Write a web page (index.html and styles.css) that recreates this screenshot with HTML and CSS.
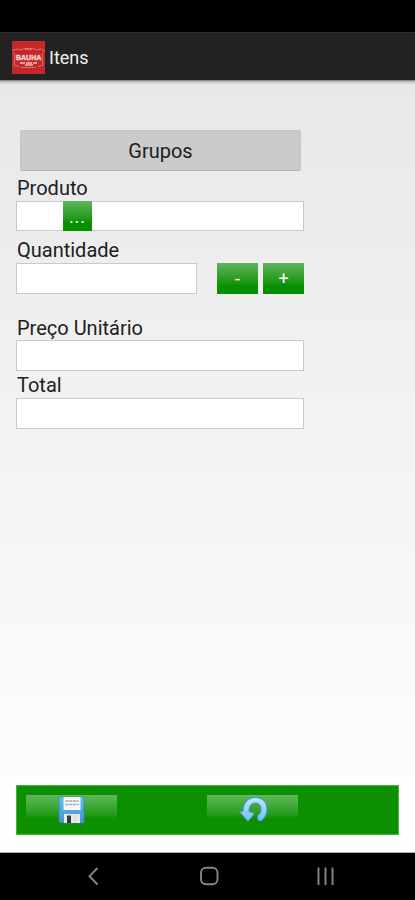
FILE: index.html
```html
<!DOCTYPE html>
<html lang="pt">
<head>
<meta charset="utf-8">
<title>Itens</title>
<link rel="stylesheet" href="styles.css">
</head>
<body>
<div class="status"></div>
<header class="header">
  <svg class="logo" viewBox="0 0 33 33">
    <rect width="33" height="33" fill="#c62829"/>
    <g fill="none" stroke="#dc8583" stroke-width=".8">
      <path d="M0 9.500 5 8 8 9 12 7.500 21 7.500 25 9 29 8 33 10.500M1 12 3 14 2 24 7 25.500M31 12 30 14 31 24 26 25.500M9 26.500h15M13 8.500h7"/>
    </g>
    <text x="4" y="18.500" class="brand">BAUHA</text>
    <path d="M8 22h5m1 0h6m1 0h4M13 24h8" stroke="#eebbb9" stroke-width="1.300"/>
  </svg>
  <h1 class="title">Itens</h1>
</header>
<main class="content">
  <form class="form">
    <button type="button" class="groups">Grupos</button>
    <label class="label">Produto</label>
    <div class="field product"><button type="button" class="green dots">...</button></div>
    <label class="label label-qty">Quantidade</label>
    <div class="row">
      <div class="field qty"></div>
      <button type="button" class="green step minus">-</button>
      <button type="button" class="green step">+</button>
    </div>
    <label class="label label-price">Preço Unitário</label>
    <div class="field"></div>
    <label class="label label-total">Total</label>
    <div class="field"></div>
  </form>
  <footer class="toolbar">
    <button type="button" class="tool">
      <svg width="27" height="28" viewBox="0 0 27 28">
        <defs><linearGradient id="disk" x2="0" y2="1"><stop stop-color="#62bceb"/><stop offset="1" stop-color="#4795d4"/></linearGradient></defs>
        <path d="M1 1h25v26H3l-2-2z" fill="url(#disk)" stroke="#3d83bd" stroke-width=".7"/>
        <path d="M5.500 1h17v13h-17z" fill="#f5f7f8"/>
        <path d="M7.500 5h13M7.500 8.500h13" stroke="#a2a8ad" stroke-width="1.400" stroke-dasharray="3 .7"/>
        <path d="M6 18h16v9H6z" fill="#e6e9eb"/>
        <path d="M9 19.500h4V27H9z" fill="#343b3e"/>
        <path d="M17 18v9" stroke="#c9cfd2"/>
      </svg>
    </button>
    <button type="button" class="tool">
      <svg width="30" height="28" viewBox="0 0 30 28">
        <defs><linearGradient id="undo" x2="0" y2="1"><stop stop-color="#bfe6ff"/><stop offset="1" stop-color="#72bdf5"/></linearGradient></defs>
        <path d="M1 15 5 15.500C5 7 10 1.500 17.500 1.500 24.500 1.500 29 6.500 29 13c0 5.500-2.500 9.500-6 12l-3-.500-.500-4.500c2.500-2 3.500-4 3.500-7 0-3.500-2-6-5.500-6-4 0-6.500 3-6.500 8.500l5.500 2L10 25.500z" fill="url(#undo)" stroke="#368fce" stroke-width=".9" stroke-linejoin="round"/>
      </svg>
    </button>
  </footer>
</main>
<nav class="nav">
  <svg width="415" height="47" viewBox="0 0 415 47" fill="none" stroke="#858585" stroke-width="1.900">
    <path d="M97.500 15 89.500 23.200 97.500 31.500"/>
    <rect x="201" y="14.700" width="16.500" height="16.500" rx="5"/>
    <path d="M318.500 14.500v17.500M325.500 14.500v17.500M332.500 14.500v17.500"/>
  </svg>
</nav>
</body>
</html>
```
FILE: styles.css
```css
* { box-sizing: border-box; }
body {
  margin: 0;
  width: 415px;
  height: 900px;
  display: flex;
  flex-direction: column;
  overflow: hidden;
  background: #000;
  color: #202020;
  font-family: Roboto, sans-serif;
}
button { border: 0; padding: 0; font-family: inherit; }
.status { height: 32px; flex: none; }
.header {
  height: 48px;
  flex: none;
  display: flex;
  align-items: center;
  padding: 1px 0 0 12px;
  gap: 4px;
  background: #222;
  border-top: 1px solid #303030;
}
.logo { width: 33px; height: 33px; display: block; overflow: visible; }
.brand { font: bold 7px "Liberation Sans", sans-serif; fill: #f3d2d0; stroke: #f3d2d0; stroke-width: .4px; }
.title { margin: 0; font-size: 18px; font-weight: 400; color: #f0f0f0; }
.content {
  height: 773px;
  flex: none;
  display: flex;
  flex-direction: column;
  justify-content: space-between;
  padding: 50px 16px 17px;
  background: linear-gradient(#777 0, rgba(160,160,160,.4) 2px, transparent 5px), linear-gradient(#e8e8e8, #fff);
  border-bottom: 1px solid #aaa;
}
.form { width: 288px; display: flex; flex-direction: column; }
.groups {
  height: 41px;
  margin: 0 3px 0 4px;
  background: #cbcbcb;
  border: 1px solid #c4c4c4;
  border-bottom-color: #b0b0b0;
  border-radius: 2px;
  color: #202020;
  font-size: 20px;
}
.label { height: 30px; padding: 5px 0 0 1px; font-size: 20px; line-height: 24px; }
.label-qty { height: 32px; padding-top: 7px; }
.label-price { height: 46px; padding-top: 22px; }
.label-total { height: 27px; padding-top: 2px; }
.field { height: 31px; background: #fff; border: 1px solid #c9c9c9; }
.product { padding-left: 46px; height: 30px; }
.row { display: flex; }
.qty { width: 181px; }
.green { background: linear-gradient(#60b55c 0, #249b1d 55%, #078f00 75%); color: #fff; font-size: 18px; }
.dots { width: 29px; height: 30px; margin-top: -1px; display: block; padding-top: 1px; letter-spacing: 1px; }
.step { width: 41px; height: 31px; }
.minus { margin: 0 5px 0 20px; }
.toolbar {
  width: 383px;
  height: 50px;
  display: flex;
  gap: 90px;
  padding: 9px 9px;
  background: #0c9000;
  border: 1px solid #4cb044;
}
.tool {
  width: 91px;
  height: 30px;
  display: flex;
  justify-content: center;
  padding-top: 1px;
  background: linear-gradient(#62b75b 0, #2ca025 17px, #0c9000 24px);
}
.nav { height: 47px; flex: none; }
.nav svg { display: block; }
```
